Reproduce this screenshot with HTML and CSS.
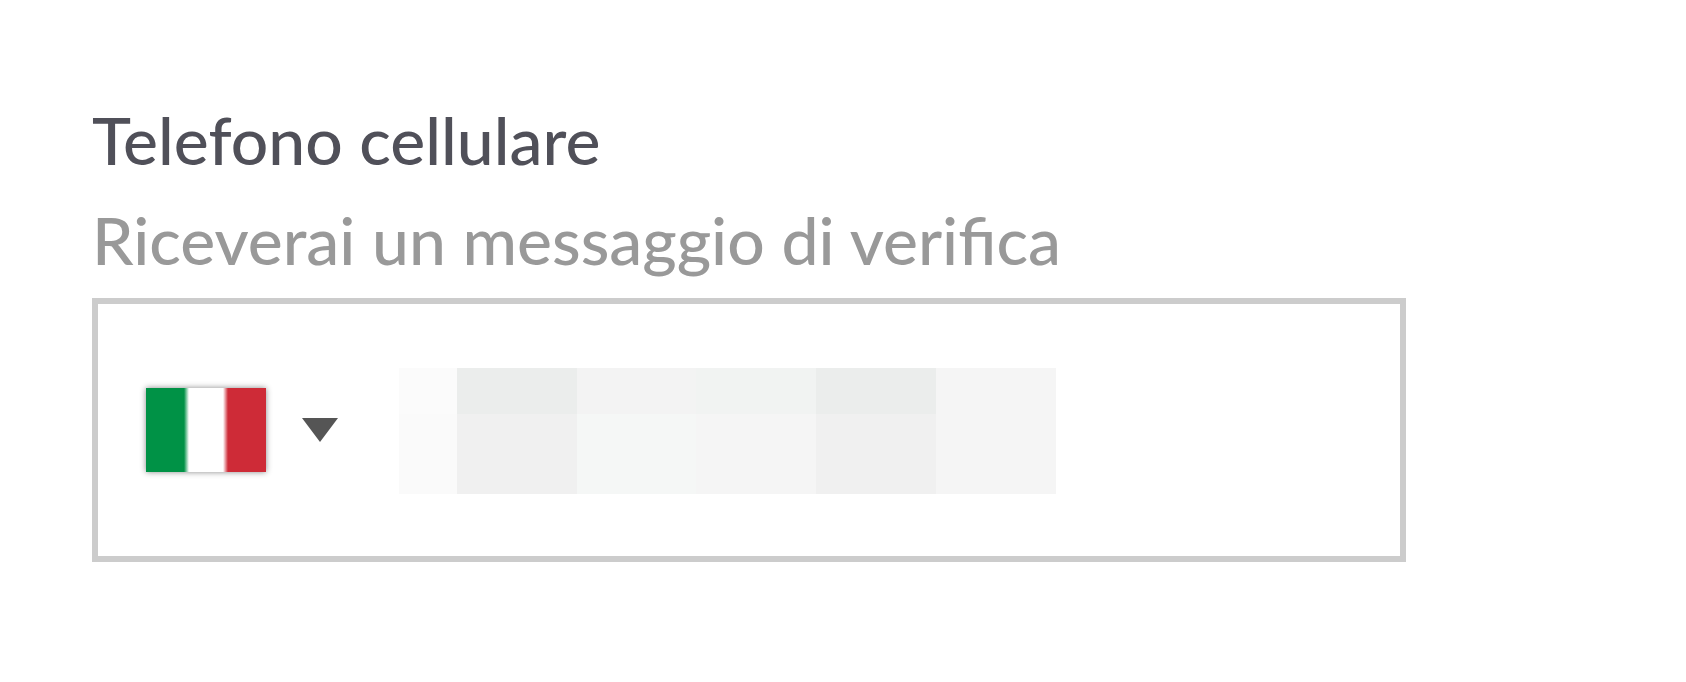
FILE: index.html
```html
<!DOCTYPE html>
<html lang="it">
<head>
    <meta charset="UTF-8">
    <meta name="viewport" content="width=device-width, initial-scale=1.0">
    <title>Telefono cellulare</title>
    <link rel="stylesheet" href="styles.css">
</head>
<body>

    <form class="phone-form">
        <label class="phone-label" for="phone">Telefono cellulare</label>
        <p class="phone-hint" id="phone-hint">Riceverai un messaggio di verifica</p>

        <div class="phone-field">
            <!-- Country selector -->
            <button class="country-button" type="button" aria-label="Italia">
                <span class="flag"></span>
                <svg class="arrow" viewBox="0 0 36 24" aria-hidden="true">
                    <path d="M0 0H36L18 24Z"/>
                </svg>
            </button>

            <!-- Number, hidden behind a mosaic -->
            <div class="number">
                <input class="number-input" type="tel" id="phone" aria-describedby="phone-hint">
                <svg class="mosaic" viewBox="0 0 657 126" aria-hidden="true">
                    <rect x="0" y="0" width="58" height="46" fill="#fbfbfb"/>
                    <rect x="58" y="0" width="120" height="46" fill="#ebedec"/>
                    <rect x="178" y="0" width="119" height="46" fill="#f3f3f3"/>
                    <rect x="297" y="0" width="120" height="46" fill="#f1f3f2"/>
                    <rect x="417" y="0" width="120" height="46" fill="#ebedec"/>
                    <rect x="537" y="0" width="120" height="46" fill="#f5f5f5"/>
                    <rect x="0" y="46" width="58" height="80" fill="#fafafa"/>
                    <rect x="58" y="46" width="120" height="80" fill="#f0f0f0"/>
                    <rect x="178" y="46" width="119" height="80" fill="#f5f7f6"/>
                    <rect x="297" y="46" width="120" height="80" fill="#f5f5f5"/>
                    <rect x="417" y="46" width="120" height="80" fill="#f0f0f0"/>
                    <rect x="537" y="46" width="120" height="80" fill="#f5f5f5"/>
                </svg>
            </div>
        </div>
    </form>

</body>
</html>
```

FILE: styles.css
```css
* {
    box-sizing: border-box;
}

body {
    font-family: Lato, sans-serif;
    font-size: 66px;
    font-weight: 500;
    line-height: 100px;
    margin: 0;
    background-color: #fff;
}

.phone-form {
    padding: 90px 280px 90px 92px;
}

.phone-label {
    display: block;
    color: #505059;
}

.phone-hint {
    margin: 0 0 8px;
    color: #999;
}

/* Bordered box */
.phone-field {
    display: flex;
    align-items: center;
    height: 264px;
    border: 6px solid #ccc;
}

/* Country selector */
.country-button {
    display: flex;
    align-items: center;
    gap: 36px;
    height: 100%;
    padding: 0 12px 0 48px;
    border: none;
    background: none;
    cursor: pointer;
}

.flag {
    width: 120px;
    height: 84px;
    /* Soft edges between the three bands */
    background: linear-gradient(to right, #009246 38px, #fff 43px, #fff 77px, #ce2b37 82px);
    box-shadow: 0 0 6px #888;
}

.arrow {
    width: 36px;
    height: 24px;
    fill: #555;
}

/* Number */
.number {
    position: relative;
    flex: 1;
    height: 100%;
}

.number-input {
    width: 100%;
    height: 100%;
    padding: 0 48px;
    border: none;
    outline: none;
    background: none;
    font: inherit;
    color: #555;
}

.mosaic {
    position: absolute;
    top: 64px;
    left: 49px;
    width: 657px;
    height: 126px;
    pointer-events: none;
}
```
